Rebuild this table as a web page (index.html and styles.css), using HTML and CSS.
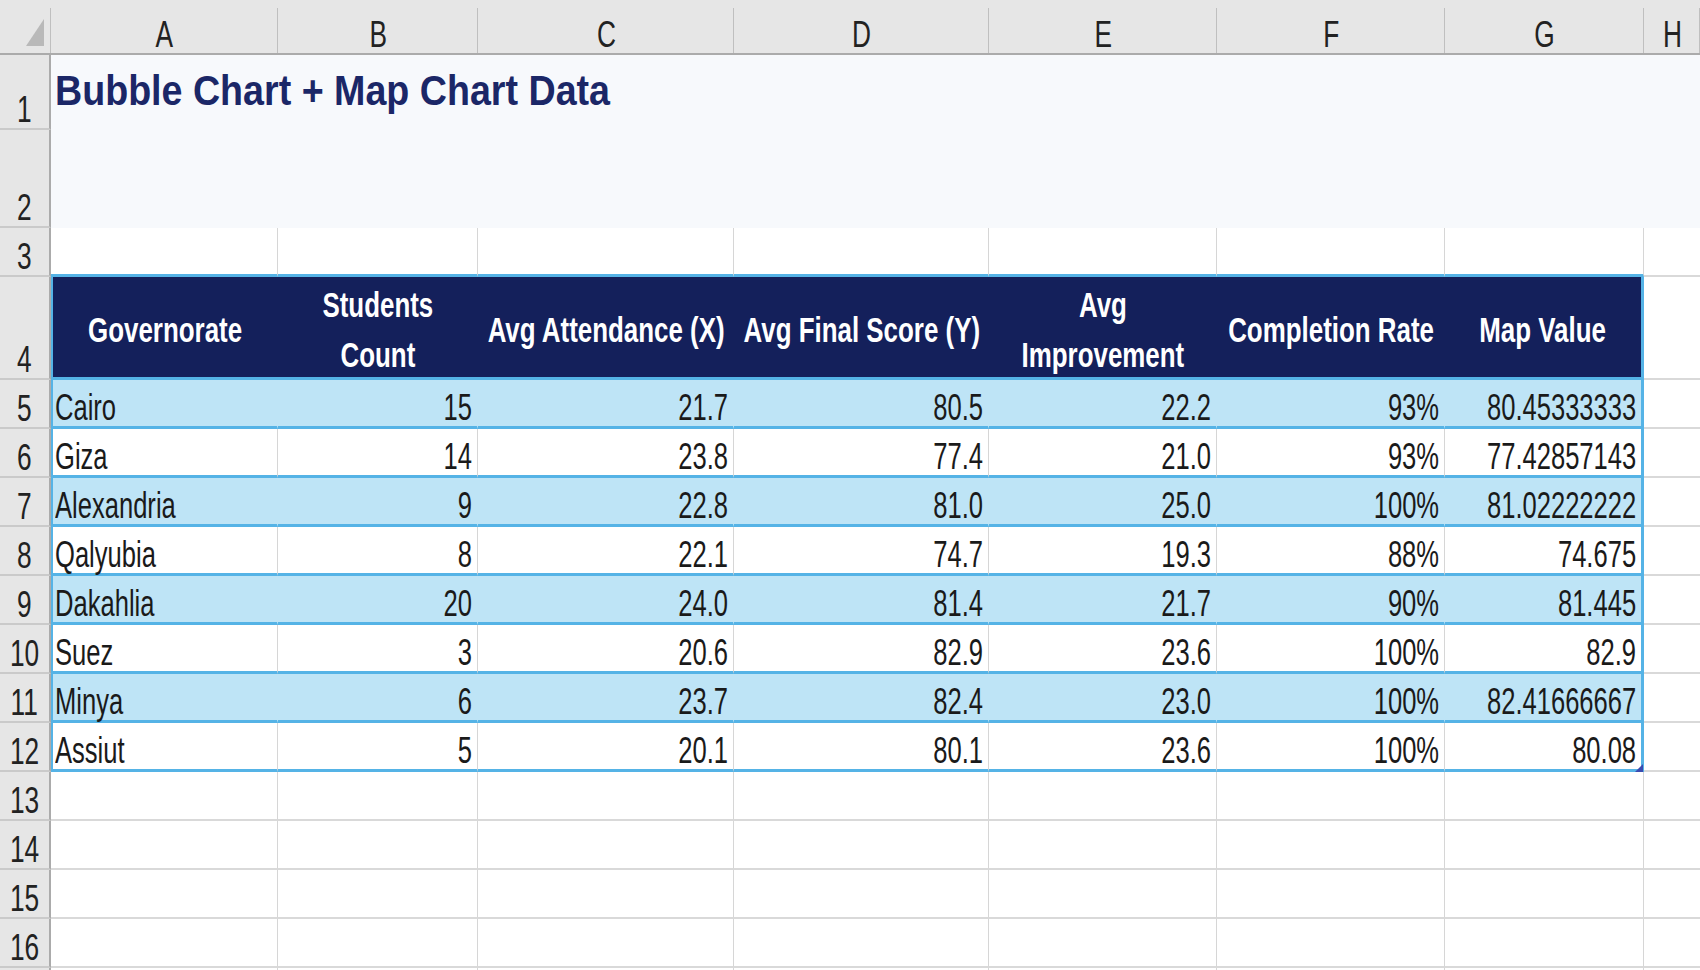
FILE: index.html
```html
<!DOCTYPE html>
<html>
<head>
<meta charset="utf-8">
<link rel="stylesheet" href="styles.css">
</head>
<body>
<div class="sheet">
  <div class="corner"><svg width="18" height="27" viewBox="0 0 18 27"><polygon points="18,0 18,27 0,27" fill="#b9b9b9"/></svg></div>
  <div class="ch"><span class="t">A</span></div>
  <div class="ch"><span class="t">B</span></div>
  <div class="ch"><span class="t">C</span></div>
  <div class="ch"><span class="t">D</span></div>
  <div class="ch"><span class="t">E</span></div>
  <div class="ch"><span class="t">F</span></div>
  <div class="ch"><span class="t">G</span></div>
  <div class="ch"><span class="t">H</span></div>

  <div class="rh"><span class="t">1</span></div>
  <div class="title-cell"><span class="title">Bubble Chart + Map Chart Data</span></div>

  <div class="rh"><span class="t">2</span></div>
  <div class="band"></div>

  <div class="rh"><span class="t">3</span></div>
  <div class="gc tt"></div><div class="gc tt"></div><div class="gc tt"></div><div class="gc tt"></div><div class="gc tt"></div><div class="gc tt"></div><div class="gc tt"></div><div class="gc last"></div>

  <div class="rh"><span class="t">4</span></div>
  <div class="th first"><span class="t">Governorate</span></div>
  <div class="th"><span class="t">Students<br>Count</span></div>
  <div class="th"><span class="t">Avg Attendance (X)</span></div>
  <div class="th"><span class="t">Avg Final Score (Y)</span></div>
  <div class="th"><span class="t">Avg<br>Improvement</span></div>
  <div class="th"><span class="t">Completion Rate</span></div>
  <div class="th end"><span class="t">Map Value</span></div>
  <div class="gc last"></div>

  <div class="rh"><span class="t">5</span></div>
  <div class="td b txt first"><span class="t">Cairo</span></div>
  <div class="td b"><span class="t">15</span></div>
  <div class="td b"><span class="t">21.7</span></div>
  <div class="td b"><span class="t">80.5</span></div>
  <div class="td b"><span class="t">22.2</span></div>
  <div class="td b"><span class="t">93%</span></div>
  <div class="td b end"><span class="t">80.45333333</span></div>
  <div class="gc last"></div>

  <div class="rh"><span class="t">6</span></div>
  <div class="td txt first"><span class="t">Giza</span></div>
  <div class="td"><span class="t">14</span></div>
  <div class="td"><span class="t">23.8</span></div>
  <div class="td"><span class="t">77.4</span></div>
  <div class="td"><span class="t">21.0</span></div>
  <div class="td"><span class="t">93%</span></div>
  <div class="td end"><span class="t">77.42857143</span></div>
  <div class="gc last"></div>

  <div class="rh"><span class="t">7</span></div>
  <div class="td b txt first"><span class="t">Alexandria</span></div>
  <div class="td b"><span class="t">9</span></div>
  <div class="td b"><span class="t">22.8</span></div>
  <div class="td b"><span class="t">81.0</span></div>
  <div class="td b"><span class="t">25.0</span></div>
  <div class="td b"><span class="t">100%</span></div>
  <div class="td b end"><span class="t">81.02222222</span></div>
  <div class="gc last"></div>

  <div class="rh"><span class="t">8</span></div>
  <div class="td txt first"><span class="t">Qalyubia</span></div>
  <div class="td"><span class="t">8</span></div>
  <div class="td"><span class="t">22.1</span></div>
  <div class="td"><span class="t">74.7</span></div>
  <div class="td"><span class="t">19.3</span></div>
  <div class="td"><span class="t">88%</span></div>
  <div class="td end"><span class="t">74.675</span></div>
  <div class="gc last"></div>

  <div class="rh"><span class="t">9</span></div>
  <div class="td b txt first"><span class="t">Dakahlia</span></div>
  <div class="td b"><span class="t">20</span></div>
  <div class="td b"><span class="t">24.0</span></div>
  <div class="td b"><span class="t">81.4</span></div>
  <div class="td b"><span class="t">21.7</span></div>
  <div class="td b"><span class="t">90%</span></div>
  <div class="td b end"><span class="t">81.445</span></div>
  <div class="gc last"></div>

  <div class="rh"><span class="t">10</span></div>
  <div class="td txt first"><span class="t">Suez</span></div>
  <div class="td"><span class="t">3</span></div>
  <div class="td"><span class="t">20.6</span></div>
  <div class="td"><span class="t">82.9</span></div>
  <div class="td"><span class="t">23.6</span></div>
  <div class="td"><span class="t">100%</span></div>
  <div class="td end"><span class="t">82.9</span></div>
  <div class="gc last"></div>

  <div class="rh"><span class="t">11</span></div>
  <div class="td b txt first"><span class="t">Minya</span></div>
  <div class="td b"><span class="t">6</span></div>
  <div class="td b"><span class="t">23.7</span></div>
  <div class="td b"><span class="t">82.4</span></div>
  <div class="td b"><span class="t">23.0</span></div>
  <div class="td b"><span class="t">100%</span></div>
  <div class="td b end"><span class="t">82.41666667</span></div>
  <div class="gc last"></div>

  <div class="rh"><span class="t">12</span></div>
  <div class="td txt first"><span class="t">Assiut</span></div>
  <div class="td"><span class="t">5</span></div>
  <div class="td"><span class="t">20.1</span></div>
  <div class="td"><span class="t">80.1</span></div>
  <div class="td"><span class="t">23.6</span></div>
  <div class="td"><span class="t">100%</span></div>
  <div class="td end corner-cell"><span class="t">80.08</span><svg class="handle" width="8" height="8" viewBox="0 0 8 8"><polygon points="8,0 8,8 0,8" fill="#3b4bb0"/></svg></div>
  <div class="gc last"></div>

  <div class="rh"><span class="t">13</span></div>
  <div class="gc"></div><div class="gc"></div><div class="gc"></div><div class="gc"></div><div class="gc"></div><div class="gc"></div><div class="gc"></div><div class="gc last"></div>

  <div class="rh"><span class="t">14</span></div>
  <div class="gc"></div><div class="gc"></div><div class="gc"></div><div class="gc"></div><div class="gc"></div><div class="gc"></div><div class="gc"></div><div class="gc last"></div>

  <div class="rh"><span class="t">15</span></div>
  <div class="gc"></div><div class="gc"></div><div class="gc"></div><div class="gc"></div><div class="gc"></div><div class="gc"></div><div class="gc"></div><div class="gc last"></div>

  <div class="rh"><span class="t">16</span></div>
  <div class="gc"></div><div class="gc"></div><div class="gc"></div><div class="gc"></div><div class="gc"></div><div class="gc"></div><div class="gc"></div><div class="gc last"></div>

  <div class="rh"></div>
  <div class="gc"></div><div class="gc"></div><div class="gc"></div><div class="gc"></div><div class="gc"></div><div class="gc"></div><div class="gc"></div><div class="gc last"></div>
</div>
</body>
</html>
```

FILE: styles.css
```css
* {
  box-sizing: border-box;
  margin: 0;
  padding: 0;
}

html, body {
  width: 1700px;
  height: 970px;
  overflow: hidden;
  background: #ffffff;
}

body {
  font-family: "Liberation Sans", Arial, sans-serif;
}

.sheet {
  display: grid;
  grid-template-columns: 51px 227px 200px 256px 255px 228px 228px 199px 56px;
  grid-template-rows: 55px 75px 98px 49px 103px repeat(13, 49px);
}

.t {
  display: inline-block;
  white-space: nowrap;
  transform: scaleX(0.71);
}

/* column headers */
.corner,
.ch {
  background: linear-gradient(#bfbfbf, #bfbfbf) right bottom / 1px calc(100% - 8px) no-repeat, #e6e6e6;
  border-bottom: 2px solid #ababab;
}

.corner {
  display: flex;
  justify-content: flex-end;
  align-items: flex-end;
  padding: 0 7px 7px 0;
}

.ch {
  display: flex;
  justify-content: center;
  align-items: flex-end;
  font-size: 37px;
  line-height: 37px;
  color: #222222;
}

.ch .t {
  transform-origin: center;
}

/* row headers */
.rh {
  background: #e6e6e6;
  border-right: 2px solid #ababab;
  border-bottom: 2px solid #cacaca;
  display: flex;
  justify-content: center;
  align-items: flex-end;
  font-size: 37px;
  line-height: 37px;
  color: #222222;
}

.rh .t {
  transform-origin: center;
}

/* title band */
.title-cell {
  grid-column: span 8;
  background: #f7f9fc;
  padding: 11px 0 0 4px;
}

.title {
  display: inline-block;
  white-space: nowrap;
  font-weight: bold;
  font-size: 43px;
  line-height: 48px;
  color: #1b2767;
  transform: scaleX(0.875);
  transform-origin: left center;
}

.band {
  grid-column: span 8;
  background: #f7f9fc;
}

/* plain grid cells */
.gc {
  background: #ffffff;
  border-right: 1px solid #d6d6d6;
  border-bottom: 2px solid #d9d9d9;
}

.gc.last {
  border-right: none;
}

.gc.tt {
  border-bottom: 3px solid #55b3e6;
}

/* table header */
.th {
  background: #14205b;
  color: #ffffff;
  font-weight: bold;
  font-size: 35px;
  line-height: 50px;
  display: flex;
  align-items: center;
  justify-content: center;
  text-align: center;
  padding-top: 6px;
  border-bottom: 3px solid #55b3e6;
}

.th .t {
  transform: scaleX(0.74);
  transform-origin: center;
}

/* table data */
.td {
  display: flex;
  align-items: flex-end;
  justify-content: flex-end;
  padding: 0 5px;
  font-size: 36px;
  line-height: 36px;
  color: #1a1a1a;
  background: #ffffff;
  border-right: 1px solid #d6d6d6;
  border-bottom: 3px solid #55b3e6;
}

.td .t {
  transform-origin: right center;
}

.td.txt {
  justify-content: flex-start;
  padding-left: 2px;
}

.td.txt .t {
  transform-origin: left center;
}

.td.b {
  background: #bee4f6;
  border-right-color: transparent;
}

.first {
  border-left: 2px solid #55b3e6;
}

.th.end,
.td.end {
  border-right: 3px solid #55b3e6;
}

.corner-cell {
  position: relative;
}

.handle {
  position: absolute;
  right: -2px;
  bottom: -3px;
}
```
